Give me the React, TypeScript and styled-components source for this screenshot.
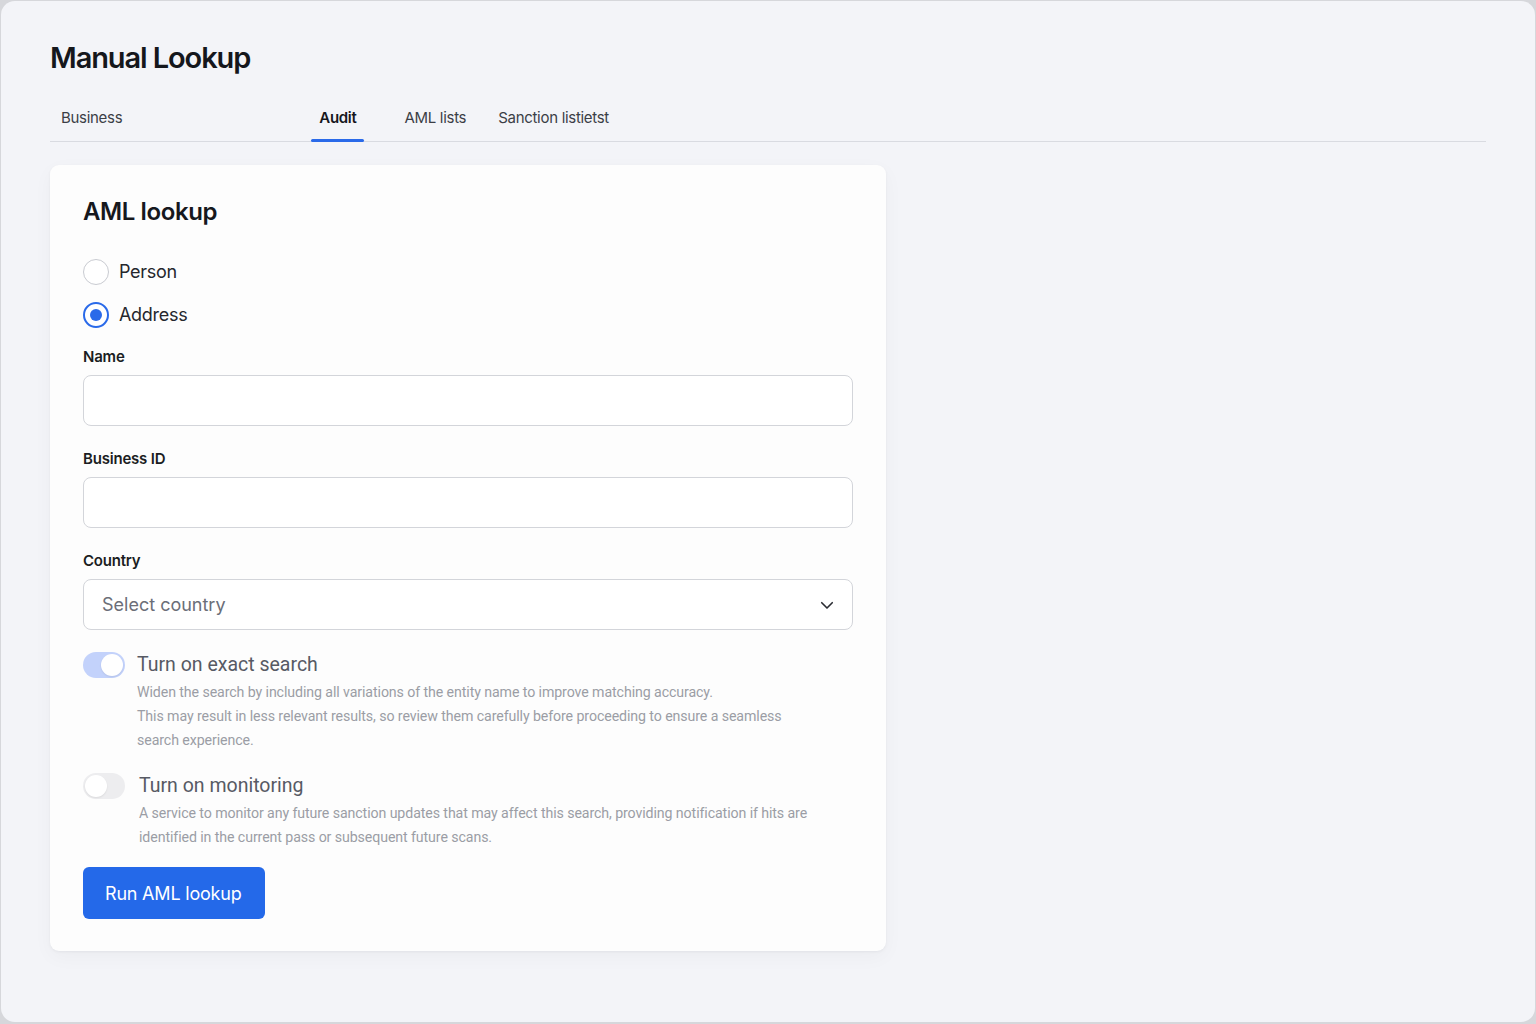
import React, {useState} from 'react'
import styled, {createGlobalStyle} from 'styled-components'

const GlobalStyle = createGlobalStyle`
  html, body {
    margin: 0;
    padding: 0;
    background: #d6d7db;
  }
  body {
    font-family: Inter, "Noto Sans", "Liberation Sans", sans-serif;
    -webkit-font-smoothing: antialiased;
  }
  * {
    box-sizing: border-box;
  }
`

const Frame = styled.div`
  width: 1536px;
  height: 1024px;
  padding: 1px 1px 2px 1px;
`

const Window = styled.main`
  height: 100%;
  border-radius: 14px;
  background: #f3f4f8;
  padding: 39px 49px 0 49px;
`

const PageTitle = styled.h1`
  margin: 0;
  font-size: 29px;
  line-height: 36px;
  font-weight: 600;
  letter-spacing: -1.1px;
  color: #15171c;
`

const TabList = styled.nav`
  display: flex;
  align-items: stretch;
  margin-top: 32px;
  padding-left: 3px;
  border-bottom: 1px solid #d9dbe1;
`

const Tab = styled.button<{$active?: boolean; $offset: number}>`
  position: relative;
  margin-left: ${p => p.$offset}px;
  padding: 0 8px 13px;
  border: 0;
  background: none;
  font-family: inherit;
  font-size: 15px;
  line-height: 20px;
  letter-spacing: -0.3px;
  font-weight: ${p => (p.$active ? 600 : 400)};
  color: ${p => (p.$active ? '#15171c' : '#3b3e46')};
  cursor: pointer;

  &::after {
    content: '';
    position: absolute;
    left: 0;
    right: 0;
    bottom: -1px;
    height: 3px;
    border-radius: 2px;
    background: ${p => (p.$active ? '#2a6ae9' : 'transparent')};
  }
`

const Card = styled.section`
  width: 836px;
  margin-top: 23px;
  padding: 33px 33px 32px;
  border-radius: 9px;
  background: #fdfdfd;
  box-shadow: 0 1px 3px rgba(20, 24, 40, 0.05), 0 6px 20px rgba(20, 24, 40, 0.035);
`

const CardTitle = styled.h2`
  margin: 0;
  font-size: 24px;
  line-height: 28px;
  font-weight: 600;
  letter-spacing: -0.4px;
  color: #16181d;
`

const RadioGroup = styled.div`
  display: flex;
  flex-direction: column;
  gap: 17px;
  margin-top: 33px;
`

const RadioRow = styled.label`
  display: flex;
  align-items: center;
  gap: 10px;
  cursor: pointer;
  font-size: 18px;
  line-height: 26px;
  letter-spacing: -0.3px;
  color: #25272d;
`

const RadioDot = styled.span<{$checked: boolean}>`
  width: 26px;
  height: 26px;
  border-radius: 50%;
  border: ${p => (p.$checked ? '2px solid #2a6ae9' : '1.5px solid #c9cbd1')};
  background: #fff;
  display: flex;
  align-items: center;
  justify-content: center;

  &::after {
    content: '';
    width: 12px;
    height: 12px;
    border-radius: 50%;
    background: ${p => (p.$checked ? '#2a6ae9' : 'transparent')};
  }
`

const Field = styled.div<{$top: number}>`
  margin-top: ${p => p.$top}px;
`

const FieldLabel = styled.div`
  font-size: 15px;
  line-height: 18px;
  font-weight: 600;
  letter-spacing: -0.2px;
  color: #1b1d22;
  margin-bottom: 9px;
`

const TextInput = styled.input`
  display: block;
  width: 100%;
  height: 51px;
  padding: 0 18px;
  border: 1.5px solid #d3d5da;
  border-radius: 8px;
  background: #fff;
  font-family: inherit;
  font-size: 17px;
  color: #1b1d22;
  outline: none;
`

const SelectBox = styled.div`
  display: flex;
  align-items: center;
  justify-content: space-between;
  height: 51px;
  padding: 0 16px 0 18px;
  border: 1.5px solid #d3d5da;
  border-radius: 8px;
  background: #fff;
  font-size: 18px;
  color: #6b6e78;
  cursor: pointer;
`

const ToggleBlock = styled.div<{$top: number}>`
  margin-top: ${p => p.$top}px;
  display: grid;
  grid-template-columns: 42px 1fr;
  column-gap: 12px;
  font-family: Roboto, "Liberation Sans", sans-serif;
`

const Switch = styled.span<{$on: boolean}>`
  position: relative;
  width: 42px;
  height: 26px;
  border-radius: 13px;
  background: ${p => (p.$on ? '#c3d2fb' : '#ededef')};
  cursor: pointer;

  &::after {
    content: '';
    position: absolute;
    top: 2px;
    left: ${p => (p.$on ? '18px' : '2px')};
    width: 22px;
    height: 22px;
    border-radius: 50%;
    background: #fff;
    box-shadow: 0 1px 2px rgba(0, 0, 0, 0.08);
  }
`

const ToggleTitle = styled.div<{$indent?: number}>`
  padding-left: ${p => p.$indent ?? 0}px;
  font-size: 19.5px;
  line-height: 26px;
  color: #575a64;
`

const ToggleText = styled.p<{$indent?: number}>`
  grid-column: 2;
  margin: 2px 0 0;
  padding-left: ${p => p.$indent ?? 0}px;
  font-size: 14.2px;
  line-height: 24px;
  letter-spacing: -0.1px;
  white-space: nowrap;
  color: #9b9da5;
`

const PrimaryButton = styled.button`
  margin-top: 18px;
  height: 52px;
  padding: 0 23px 0 22px;
  border: 0;
  border-radius: 6px;
  background: #2469e9;
  color: #fff;
  font-family: inherit;
  font-size: 18px;
  letter-spacing: -0.2px;
  cursor: pointer;
`

const tabs = [
  {label: 'Business', offset: 0},
  {label: 'Audit', offset: 181},
  {label: 'AML lists', offset: 32},
  {label: 'Sanction listietst', offset: 16},
]

export default function App() {
  const [activeTab, setActiveTab] = useState('Audit')
  const [entity, setEntity] = useState<'person' | 'address'>('address')
  const [exact, setExact] = useState(true)
  const [monitoring, setMonitoring] = useState(false)

  return (
    <>
      <GlobalStyle />
      <Frame>
        <Window>
          <PageTitle>Manual Lookup</PageTitle>
          <TabList>
            {tabs.map(t => (
              <Tab
                key={t.label}
                $offset={t.offset}
                $active={activeTab === t.label}
                onClick={() => setActiveTab(t.label)}
              >
                {t.label}
              </Tab>
            ))}
          </TabList>

          <Card>
            <CardTitle>AML lookup</CardTitle>

            <RadioGroup>
              <RadioRow onClick={() => setEntity('person')}>
                <RadioDot $checked={entity === 'person'} />
                Person
              </RadioRow>
              <RadioRow onClick={() => setEntity('address')}>
                <RadioDot $checked={entity === 'address'} />
                Address
              </RadioRow>
            </RadioGroup>

            <Field $top={20}>
              <FieldLabel>Name</FieldLabel>
              <TextInput />
            </Field>

            <Field $top={24}>
              <FieldLabel>Business ID</FieldLabel>
              <TextInput />
            </Field>

            <Field $top={24}>
              <FieldLabel>Country</FieldLabel>
              <SelectBox>
                Select country
                <svg width="18" height="18" viewBox="0 0 24 24" fill="none" stroke="#2a2c32" strokeWidth="2.2" strokeLinecap="round" strokeLinejoin="round">
                  <path d="M5 9l7 7 7-7" />
                </svg>
              </SelectBox>
            </Field>

            <ToggleBlock $top={22}>
              <Switch $on={exact} onClick={() => setExact(!exact)} />
              <ToggleTitle>Turn on exact search</ToggleTitle>
              <ToggleText>
                Widen the search by including all variations of the entity name to improve matching accuracy.
                <br />
                This may result in less relevant results, so review them carefully before proceeding to ensure a seamless
                <br />
                search experience.
              </ToggleText>
            </ToggleBlock>

            <ToggleBlock $top={21}>
              <Switch $on={monitoring} onClick={() => setMonitoring(!monitoring)} />
              <ToggleTitle $indent={2}>Turn on monitoring</ToggleTitle>
              <ToggleText $indent={2}>
                A service to monitor any future sanction updates that may affect this search, providing notification if hits are
                <br />
                identified in the current pass or subsequent future scans.
              </ToggleText>
            </ToggleBlock>

            <PrimaryButton>Run AML lookup</PrimaryButton>
          </Card>
        </Window>
      </Frame>
    </>
  )
}
